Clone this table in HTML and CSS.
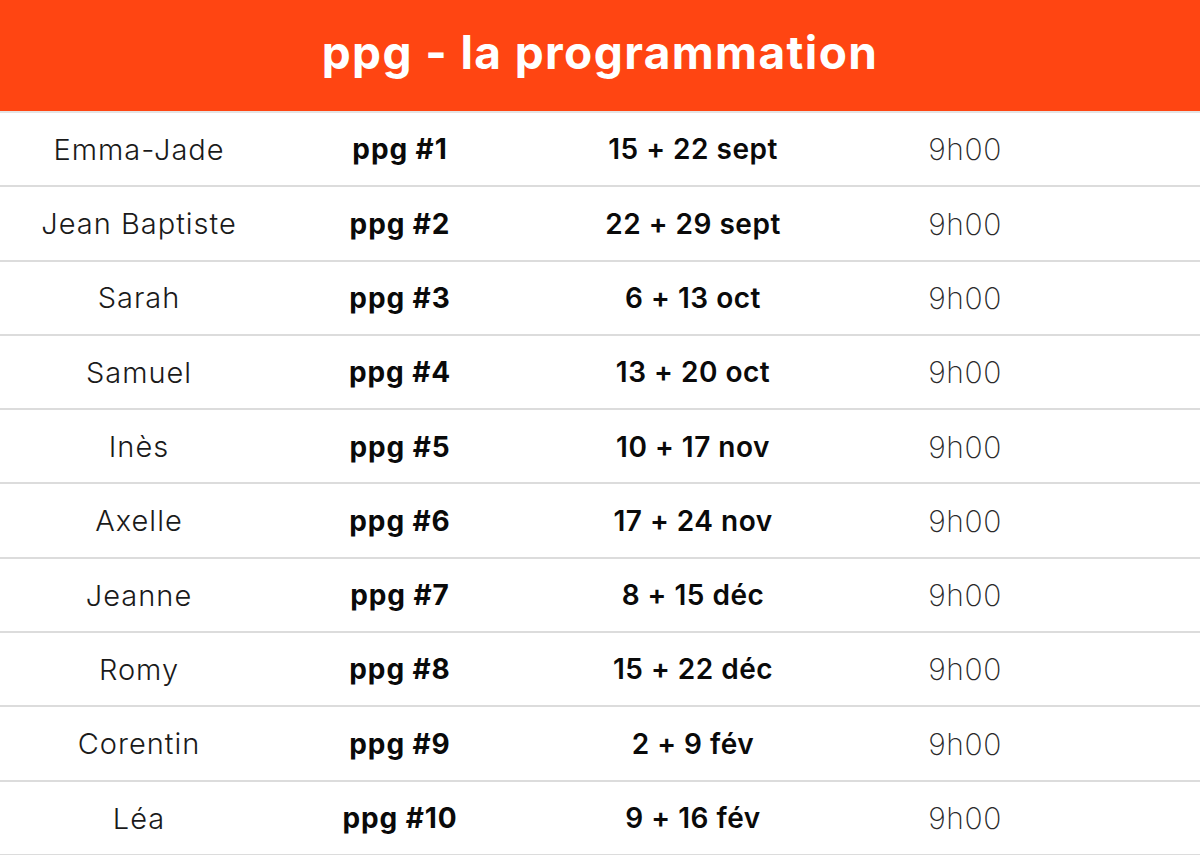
FILE: index.html
```html
<!DOCTYPE html>
<html lang="fr">
<head>
<meta charset="utf-8">
<title>ppg - la programmation</title>
<link rel="stylesheet" href="styles.css">
</head>
<body>
<header class="banner"><h1 class="title">ppg - la programmation</h1></header>
<main class="schedule">
  <div class="row"><span class="name">Emma-Jade</span><span class="ppg">ppg #1</span><span class="date">15 + 22 sept</span><span class="time">9h00</span></div>
  <div class="row"><span class="name">Jean Baptiste</span><span class="ppg">ppg #2</span><span class="date">22 + 29 sept</span><span class="time">9h00</span></div>
  <div class="row"><span class="name">Sarah</span><span class="ppg">ppg #3</span><span class="date">6 + 13 oct</span><span class="time">9h00</span></div>
  <div class="row"><span class="name">Samuel</span><span class="ppg">ppg #4</span><span class="date">13 + 20 oct</span><span class="time">9h00</span></div>
  <div class="row"><span class="name">Inès</span><span class="ppg">ppg #5</span><span class="date">10 + 17 nov</span><span class="time">9h00</span></div>
  <div class="row"><span class="name">Axelle</span><span class="ppg">ppg #6</span><span class="date">17 + 24 nov</span><span class="time">9h00</span></div>
  <div class="row"><span class="name">Jeanne</span><span class="ppg">ppg #7</span><span class="date">8 + 15 déc</span><span class="time">9h00</span></div>
  <div class="row"><span class="name">Romy</span><span class="ppg">ppg #8</span><span class="date">15 + 22 déc</span><span class="time">9h00</span></div>
  <div class="row"><span class="name">Corentin</span><span class="ppg">ppg #9</span><span class="date">2 + 9 fév</span><span class="time">9h00</span></div>
  <div class="row"><span class="name">Léa</span><span class="ppg">ppg #10</span><span class="date">9 + 16 fév</span><span class="time">9h00</span></div>
</main>
</body>
</html>
```

FILE: styles.css
```css
* { box-sizing: border-box; }
html, body { margin: 0; padding: 0; background: #ffffff; }
body {
  width: 1200px;
  height: 855px;
  overflow: hidden;
  font-family: Inter, "Open Sans", sans-serif;
  color: #111;
}
.banner {
  height: 113px;
  background: #ff4512;
  display: flex;
  align-items: center;
  justify-content: center;
  border-bottom: 2px solid #e4e4e4;
}
.title {
  margin: 0;
  color: #ffffff;
  font-weight: 700;
  font-size: 46px;
  letter-spacing: 1.4px;
  padding-bottom: 8px;
}
.schedule { display: flex; flex-direction: column; }
.row {
  height: 74.3px;
  display: grid;
  grid-template-columns: 278px 244px 342px 202px 1fr;
  align-items: center;
  justify-items: center;
  border-bottom: 2px solid #dcdcdc;
  padding-top: 0.5px;
}
.name { font-weight: 300; font-size: 29px; color: #1a1a1a; letter-spacing: 1px; }
.ppg { font-weight: 700; font-size: 28px; color: #0a0a0a; letter-spacing: 0.9px; }
.date { font-weight: 600; font-size: 28px; color: #0a0a0a; letter-spacing: 0.5px; }
.time { font-weight: 200; font-size: 30px; color: #2a2a2a; letter-spacing: 0.6px; }
```
